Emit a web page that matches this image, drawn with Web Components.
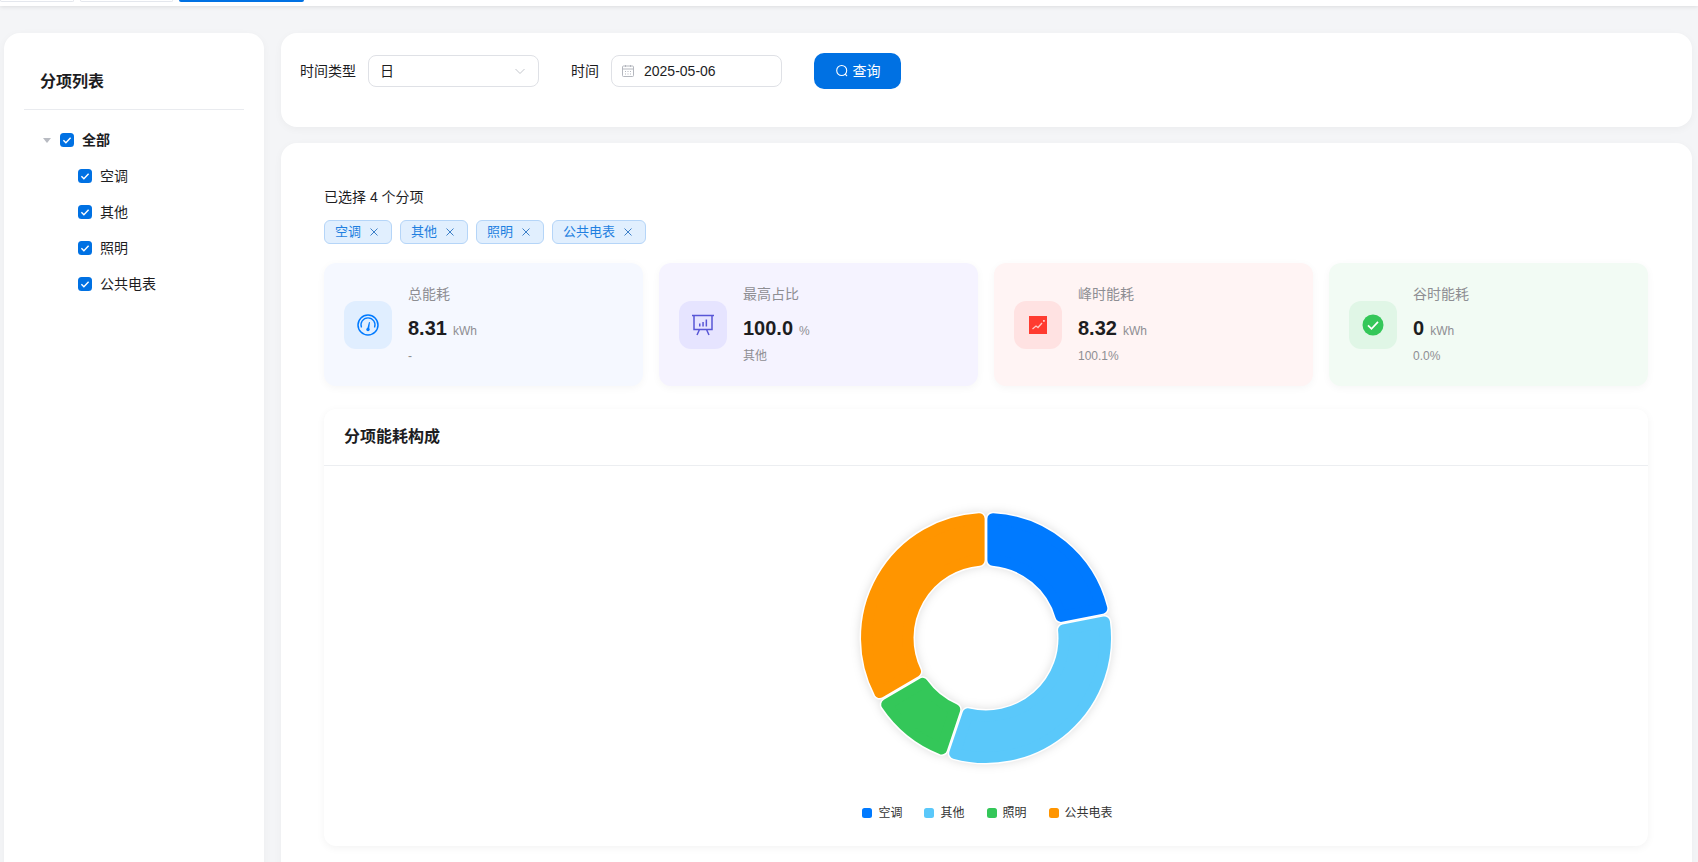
<!DOCTYPE html>
<html lang="zh">
<head>
<meta charset="utf-8">
<title>分项能耗</title>
<style>
  html, body { margin: 0; height: 100%; overflow: hidden; }
  body {
    background: #f4f5f7;
    color: #1d1d1f;
    font: 14px/20px "Liberation Sans", "Noto Sans CJK SC", sans-serif;
  }
</style>
</head>
<body>
<top-tabs></top-tabs>
<page-layout>
  <tree-panel slot="side" heading="分项列表">
    <tree-item root>全部</tree-item>
    <tree-item>空调</tree-item>
    <tree-item>其他</tree-item>
    <tree-item>照明</tree-item>
    <tree-item>公共电表</tree-item>
  </tree-panel>
  <filter-bar slot="main"></filter-bar>
  <result-panel slot="main">
    <tag-chip>空调</tag-chip>
    <tag-chip>其他</tag-chip>
    <tag-chip>照明</tag-chip>
    <tag-chip>公共电表</tag-chip>
    <stat-card slot="stats" kind="blue" label="总能耗" value="8.31" unit="kWh" note="-"></stat-card>
    <stat-card slot="stats" kind="purple" label="最高占比" value="100.0" unit="%" note="其他"></stat-card>
    <stat-card slot="stats" kind="red" label="峰时能耗" value="8.32" unit="kWh" note="100.1%"></stat-card>
    <stat-card slot="stats" kind="green" label="谷时能耗" value="0" unit="kWh" note="0.0%"></stat-card>
    <chart-card slot="chart" heading="分项能耗构成"></chart-card>
  </result-panel>
</page-layout>

<script>
const CHECK = `<svg viewBox="0 0 14 14" width="14" height="14"><path d="M3.4 7.2l2.5 2.5 4.7-5" fill="none" stroke="#fff" stroke-width="1.4"/></svg>`;

class TopTabs extends HTMLElement {
  constructor() {
    super();
    this.attachShadow({ mode: 'open' }).innerHTML = `
      <style>
        :host { display: flex; gap: 6px; height: 6px; background: #fff; box-shadow: 0 1px 4px rgba(0,0,0,.1); position: relative; }
        i { display: block; height: 1px; border: 1px solid #e4e7ed; border-top: 0; border-radius: 0 0 2px 2px; box-sizing: content-box; }
        .a { width: 72px; }
        .b { width: 91px; }
        .c { width: 125px; height: 2px; background: #0071e3; border: 0; }
      </style>
      <i class="a"></i><i class="b"></i><i class="c"></i>`;
  }
}

class PageLayout extends HTMLElement {
  constructor() {
    super();
    this.attachShadow({ mode: 'open' }).innerHTML = `
      <style>
        :host { display: flex; gap: 17px; padding: 27px 6px 0 4px; height: 900px; }
        .side { display: flex; width: 260px; flex: none; }
        .main { flex: 1; min-width: 0; display: flex; flex-direction: column; gap: 16px; }
        ::slotted(tree-panel) { flex: 1; }
      </style>
      <div class="side"><slot name="side"></slot></div>
      <div class="main"><slot name="main"></slot></div>`;
  }
}

class TreePanel extends HTMLElement {
  constructor() {
    super();
    this.attachShadow({ mode: 'open' }).innerHTML = `
      <style>
        :host { display: block; background: #fff; border-radius: 16px; padding: 0 20px; box-shadow: 0 2px 8px rgba(0,0,0,.04); }
        h3 { margin: 0; height: 77px; box-sizing: border-box; padding: 37px 16px 0; font-size: 16px; line-height: 24px; font-weight: 700; color: #1d1d1f; border-bottom: 1px solid #e9ebef; }
        .tree { padding-top: 12px; }
      </style>
      <h3></h3>
      <div class="tree"><slot></slot></div>`;
    this.shadowRoot.querySelector('h3').textContent = this.getAttribute('heading');
  }
}

class TreeItem extends HTMLElement {
  constructor() {
    super();
    const root = this.hasAttribute('root');
    this.attachShadow({ mode: 'open' }).innerHTML = `
      <style>
        :host { display: flex; align-items: center; height: 36px; padding-left: ${root ? 19 : 54}px; font-size: 14px; color: #1d1d1f; }
        :host([root]) { font-weight: 700; }
        .arrow { width: 0; height: 0; border: 4px solid transparent; border-top: 5px solid #b8bbc2; border-bottom: 0; margin-right: 9px; }
        .box { width: 14px; height: 14px; border-radius: 3.5px; background: #0071e3; margin-right: 8px; }
        svg { display: block; }
      </style>
      ${root ? '<span class="arrow"></span>' : ''}
      <span class="box">${CHECK}</span>
      <slot></slot>`;
  }
}

class FilterBar extends HTMLElement {
  constructor() {
    super();
    this.attachShadow({ mode: 'open' }).innerHTML = `
      <style>
        :host { display: flex; align-items: center; align-self: stretch; background: #fff; border-radius: 16px; height: 94px; box-sizing: border-box; padding: 20px 19px 38px; font-size: 14px; box-shadow: 0 2px 8px rgba(0,0,0,.04); color: #1d1d1f; }
        .field { display: flex; align-items: center; width: 171px; height: 32px; box-sizing: border-box; margin: 0 32px 0 12px; border: 1px solid #dfe1e6; border-radius: 8px; padding: 0 12px 0 11px; }
        .field.date { padding-left: 9px; gap: 9px; font-size: 14px; }
        .chev { margin-left: auto; }
        button { display: flex; align-items: center; justify-content: center; gap: 4px; width: 87px; height: 36px; border: 0; border-radius: 10px; background: #0071e3; color: #fff; font: inherit; padding: 0; }
        svg { display: block; }
      </style>
      <span>时间类型</span>
      <div class="field">
        <span>日</span>
        <svg class="chev" width="12" height="12" viewBox="0 0 12 12"><path d="M1.5 4l4.5 4.5L10.500 4" fill="none" stroke="#c4c7cd" stroke-width="1"/></svg>
      </div>
      <span>时间</span>
      <div class="field date">
        <svg width="14" height="14" viewBox="0 0 14 14" fill="none" stroke="#b4b7be" stroke-width="1"><rect x="1.500" y="2" width="11" height="10.500" rx="1"/><path d="M1.500 5h11M4.500 1v2M9.500 1v2M4 7.500h1M6.500 7.500h1M9 7.500h1M4 10h1M6.500 10h1M9 10h1"/></svg>
        <span>2025-05-06</span>
      </div>
      <button>
        <svg width="14" height="14" viewBox="0 0 14 14" fill="none" stroke="#fff" stroke-width="1.100"><circle cx="6.700" cy="6.500" r="5"/><path d="M10.200 10.200l1.800 1.800"/></svg>
        查询
      </button>`;
  }
}

class TagChip extends HTMLElement {
  constructor() {
    super();
    this.attachShadow({ mode: 'open' }).innerHTML = `
      <style>
        :host { display: inline-flex; align-items: center; height: 24px; box-sizing: border-box; padding: 0 12px 0 10px; gap: 8px; border: 1px solid #b5d5f8; border-radius: 6px; background: #e1effe; color: #1f7fe0; font-size: 13px; }
        svg { display: block; }
      </style>
      <slot></slot>
      <svg width="10" height="10" viewBox="0 0 10 10"><path d="M1.500 1.500l7 7M8.500 1.500l-7 7" stroke="#3d80c8" stroke-width="1"/></svg>`;
  }
}

const STAT_KINDS = {
  blue: { bg: '#f5f8ff', tile: '#e0eeff', icon: `<circle cx="12" cy="12" r="10" fill="none" stroke="#007aff" stroke-width="1.500"/><path d="M5.500 14.500a7 7 0 1 1 13 0" fill="none" stroke="#007aff" stroke-width="1.300"/><path d="M11 16.500l2-7.500 1 .300-1 7.500z" fill="#007aff"/><circle cx="12" cy="16.500" r="1.700" fill="#007aff"/>` },
  purple: { bg: '#f5f3ff', tile: '#e6e4ff', icon: `<path d="M1 2.500h22M3 2.500v14h18v-14M8.500 16.500l-2.500 5.500M15.500 16.500l2.500 5.500" fill="none" stroke="#5856d6" stroke-width="1.500"/><path d="M8 10.500h1.500v3H8zM11.300 9h1.500v4.500h-1.500zM14.600 6.500h1.500v7h-1.500z" fill="#5856d6"/>` },
  red: { bg: '#fff4f4', tile: '#ffe2e2', icon: `<rect x="3" y="3" width="18" height="18" fill="#ff3b30"/><path d="M6.500 16l3.500-3 2 1.500 4-4.500" fill="none" stroke="#ffc9c5" stroke-width="1.300"/><rect x="17" y="7" width="1.800" height="1.800" fill="#ffc9c5"/>` },
  green: { bg: '#f2fbf4', tile: '#e0f6e6', icon: `<circle cx="12" cy="12" r="10.500" fill="#34c759"/><path d="M7 12.300l3.500 3.500 6.500-7" fill="none" stroke="#fff" stroke-width="1.700"/>` }
};

class StatCard extends HTMLElement {
  constructor() {
    super();
    const kind = STAT_KINDS[this.getAttribute('kind')];
    this.attachShadow({ mode: 'open' }).innerHTML = `
      <style>
        :host { display: flex; align-items: center; gap: 16px; height: 123px; box-sizing: border-box; padding: 0 20px; border-radius: 12px; background: ${kind.bg}; box-shadow: 0 2px 8px rgba(0,0,0,.04); }
        .tile { width: 48px; height: 48px; flex: none; display: flex; align-items: center; justify-content: center; border-radius: 12px; background: ${kind.tile}; }
        .text { padding-bottom: 2px; }
        .label { font-size: 14px; line-height: 20px; color: #8e8e93; }
        .line { display: flex; align-items: baseline; margin-top: 10px; height: 28px; line-height: 28px; }
        b { font-size: 20px; color: #1d1d1f; }
        .unit { margin-left: 6px; font-size: 12px; color: #8e8e93; }
        .note { margin-top: 6px; font-size: 12px; line-height: 16px; color: #8e8e93; }
        svg { display: block; }
      </style>
      <div class="tile"><svg width="24" height="24" viewBox="0 0 24 24">${kind.icon}</svg></div>
      <div class="text">
        <div class="label">${this.getAttribute('label')}</div>
        <div class="line"><b>${this.getAttribute('value')}</b><span class="unit">${this.getAttribute('unit')}</span></div>
        <div class="note">${this.getAttribute('note')}</div>
      </div>`;
  }
}

const SEGMENTS = [
  { name: '空调', color: '#007aff', from: 0, to: 79 },
  { name: '其他', color: '#5ac8fa', from: 79, to: 198.5 },
  { name: '照明', color: '#34c759', from: 198.5, to: 239.5 },
  { name: '公共电表', color: '#ff9500', from: 239.5, to: 360 }
];

class DonutChart extends HTMLElement {
  constructor() {
    super();
    this.attachShadow({ mode: 'open' }).innerHTML = `
      <style>
        :host { display: block; width: 300px; height: 300px; }
        svg { display: block; overflow: visible; }
      </style>
      <svg width="300" height="300" viewBox="0 0 300 300">${this.rings()}</svg>`;
  }

  sectorPath(seg) {
    const corner = 5.5, gap = 1.4;
    const outer = 125 - corner, inner = 72.5 + corner;
    const pt = (r, deg) => {
      const t = deg * Math.PI / 180;
      return (150 + r * Math.sin(t)).toFixed(2) + ' ' + (150 - r * Math.cos(t)).toFixed(2);
    };
    const off = r => Math.asin((gap + corner) / r) * 180 / Math.PI;
    const large = seg.to - seg.from > 180 ? 1 : 0;
    return `M${pt(outer, seg.from + off(outer))}` +
      `A${outer} ${outer} 0 ${large} 1 ${pt(outer, seg.to - off(outer))}` +
      `L${pt(inner, seg.to - off(inner))}` +
      `A${inner} ${inner} 0 ${large} 0 ${pt(inner, seg.from + off(inner))}Z`;
  }

  rings() {
    const under = SEGMENTS.map(s => `<path d="${this.sectorPath(s)}" fill="#fff" stroke="#fff" stroke-width="14" stroke-linejoin="round"/>`).join('');
    const over = SEGMENTS.map(s => `<path d="${this.sectorPath(s)}" fill="${s.color}" stroke="${s.color}" stroke-width="11" stroke-linejoin="round"/>`).join('');
    return `<g style="filter: drop-shadow(0 0 5px rgba(0,0,0,.13))">${under}</g>${over}`;
  }
}

class ChartCard extends HTMLElement {
  constructor() {
    super();
    const legend = SEGMENTS.map(s => `<span class="item"><i style="background:${s.color}"></i>${s.name}</span>`).join('');
    this.attachShadow({ mode: 'open' }).innerHTML = `
      <style>
        :host { display: block; height: 437px; background: #fff; border-radius: 12px; box-shadow: 0 2px 8px rgba(0,0,0,.05); }
        h3 { margin: 0; height: 57px; box-sizing: border-box; padding: 16px 20px 0; font-size: 16px; line-height: 24px; font-weight: 700; color: #1d1d1f; border-bottom: 1px solid #eceef1; }
        .body { display: flex; flex-direction: column; align-items: center; padding-top: 22px; }
        .legend { display: flex; gap: 22px; margin: 17px 0 0 3px; font-size: 12px; line-height: 16px; color: #333; }
        .item { display: flex; align-items: center; gap: 6px; }
        i { width: 10px; height: 10px; border-radius: 2.500px; }
      </style>
      <h3>${this.getAttribute('heading')}</h3>
      <div class="body">
        <donut-chart></donut-chart>
        <div class="legend">${legend}</div>
      </div>`;
  }
}

class ResultPanel extends HTMLElement {
  constructor() {
    super();
    this.attachShadow({ mode: 'open' }).innerHTML = `
      <style>
        :host { display: block; background: #fff; border-radius: 16px; padding: 44px 44px 40px 43px; box-shadow: 0 2px 8px rgba(0,0,0,.04); }
        .count { font-size: 14px; line-height: 20px; color: #1d1d1f; }
        .tags { display: flex; gap: 8px; margin-top: 13px; }
        .stats { display: grid; grid-template-columns: repeat(4, 1fr); gap: 16px; margin-top: 19px; }
        .chart { display: block; margin-top: 23px; }
      </style>
      <div class="count">已选择 4 个分项</div>
      <div class="tags"><slot></slot></div>
      <div class="stats"><slot name="stats"></slot></div>
      <div class="chart"><slot name="chart"></slot></div>`;
  }
}

customElements.define('top-tabs', TopTabs);
customElements.define('page-layout', PageLayout);
customElements.define('tree-panel', TreePanel);
customElements.define('tree-item', TreeItem);
customElements.define('filter-bar', FilterBar);
customElements.define('tag-chip', TagChip);
customElements.define('stat-card', StatCard);
customElements.define('donut-chart', DonutChart);
customElements.define('chart-card', ChartCard);
customElements.define('result-panel', ResultPanel);
</script>
</body>
</html>
